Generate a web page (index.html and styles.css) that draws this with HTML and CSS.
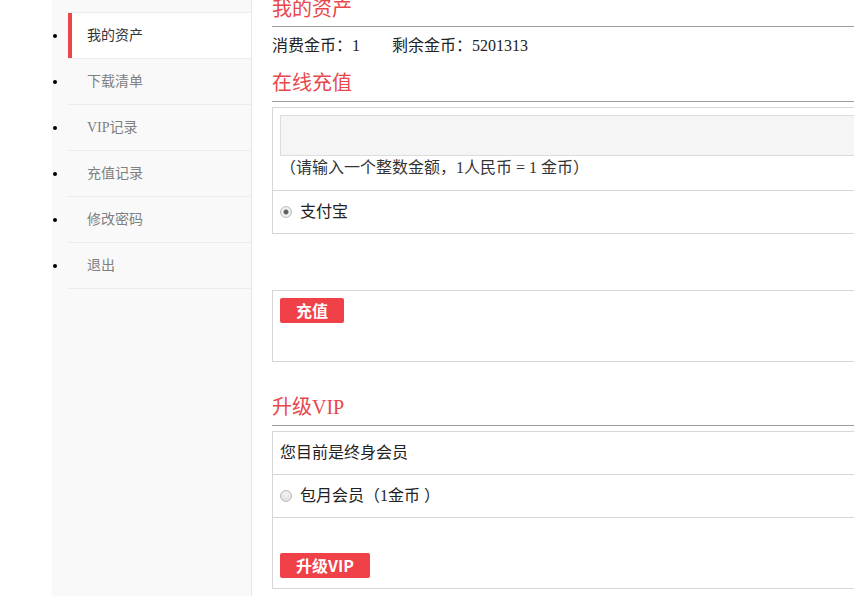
FILE: index.html
```html
<!DOCTYPE html>
<html lang="zh-CN">
<head>
<meta charset="utf-8">
<title>我的资产</title>
<link rel="stylesheet" href="styles.css">
</head>
<body>
<div class="page">
  <aside class="sidebar">
    <ul class="menu">
      <li class="menu-item active"><a class="menu-link" href="#">我的资产</a></li>
      <li class="menu-item"><a class="menu-link" href="#">下载清单</a></li>
      <li class="menu-item"><a class="menu-link" href="#">VIP记录</a></li>
      <li class="menu-item"><a class="menu-link" href="#">充值记录</a></li>
      <li class="menu-item"><a class="menu-link" href="#">修改密码</a></li>
      <li class="menu-item"><a class="menu-link" href="#">退出</a></li>
    </ul>
  </aside>
  <main class="content">
    <h2 class="title title-first">我的资产</h2>
    <p class="coins">消费金币：<span class="num">1</span><span class="coins-rest">剩余金币：<span class="num">5201313</span></span></p>

    <h2 class="title title-gap">在线充值</h2>
    <div class="box">
      <div class="row row-input">
        <input class="amount" type="text">
        <div class="hint">（请输入一个整数金额，1人民币 = 1 金币）</div>
      </div>
      <div class="row">
        <label class="choice"><input class="radio" type="radio" name="pay" checked>支付宝</label>
      </div>
    </div>

    <div class="box box-action">
      <button class="btn" type="button">充值</button>
    </div>

    <h2 class="title title-vip">升级VIP</h2>
    <div class="box">
      <div class="row">您目前是终身会员</div>
      <div class="row">
        <label class="choice"><input class="radio" type="radio" name="vip">包月会员（1金币 ）</label>
      </div>
      <div class="row row-submit">
        <button class="btn" type="button">升级VIP</button>
      </div>
    </div>
  </main>
</div>
</body>
</html>
```

FILE: styles.css
```css
html, body {
  margin: 0;
  padding: 0;
  background: #fff;
  overflow: hidden;
}

body {
  font-family: "Liberation Serif", "Noto Sans CJK SC", serif;
  color: #333;
}

.page {
  display: flex;
  align-items: stretch;
  min-height: 596px;
  padding-left: 52px;
}

.sidebar {
  box-sizing: border-box;
  width: 200px;
  flex: 0 0 200px;
  background: #f9f9f9;
  border-right: 1px solid #e6e6e6;
}

.menu {
  margin: 0;
  padding: 12px 0 0 16px;
  list-style: disc outside;
  color: #000;
  font-size: 14px;
}

.menu-item {
  border-bottom: 1px solid #ececec;
}

.menu-item:first-child {
  border-top: 1px solid #ececec;
}

.menu-link {
  display: block;
  height: 45px;
  line-height: 45px;
  padding-left: 19px;
  color: #808080;
  text-decoration: none;
}

.active .menu-link {
  background: #fff;
  color: #333;
  border-left: 4px solid #e8474b;
  padding-left: 15px;
}

.content {
  flex: 0 0 620px;
  width: 620px;
  margin-left: 20px;
}

.title {
  margin: 0;
  font-size: 20px;
  font-weight: normal;
  line-height: 18px;
  color: #e8474b;
  padding-bottom: 9px;
  border-bottom: 1px solid #9c9c9c;
}

.title-first {
  padding-bottom: 8px;
}

.title-gap {
  margin-top: 16px;
}

.title-vip {
  margin-top: 36px;
}

.coins {
  margin: 7px 0 0;
  font-size: 16px;
  line-height: 24px;
  color: #222;
}

.coins-rest {
  margin-left: 32px;
}

.box {
  margin-top: 5px;
  border: 1px solid #d6d6d6;
  font-size: 16px;
  color: #222;
}

.row {
  height: 42px;
  line-height: 42px;
  padding: 0 7px;
  border-bottom: 1px solid #d6d6d6;
}

.row:last-child {
  border-bottom: 0;
}

.row-input {
  height: auto;
  line-height: normal;
  padding: 7px 7px 10px;
}

.amount {
  display: block;
  box-sizing: border-box;
  width: 100%;
  height: 41px;
  margin: 0;
  border: 1px solid #dcdcdc;
  background: #f5f5f5;
  outline: none;
}

.hint {
  line-height: 24px;
  font-size: 16px;
  color: #333;
}

.choice {
  display: inline-flex;
  align-items: center;
}

.radio {
  appearance: none;
  -webkit-appearance: none;
  box-sizing: border-box;
  width: 12px;
  height: 12px;
  margin: 0 8px 0 0;
  border: 1px solid #bdbdbd;
  border-radius: 50%;
  background: radial-gradient(circle at 50% 35%, #f4f4f4 0%, #d9d9d9 100%);
}

.radio:checked {
  background: radial-gradient(circle, #555 0, #666 2px, #f2f2f2 3px, #e2e2e2 100%);
}

.box-action {
  margin-top: 56px;
  height: 63px;
  padding: 7px 7px 0;
}

.row-submit {
  height: 70px;
  line-height: normal;
  padding-top: 35px;
  box-sizing: border-box;
}

.btn {
  display: block;
  height: 25px;
  margin: 0;
  padding: 0 16px;
  border: 0;
  border-radius: 2px;
  background: #ef4147;
  color: #fff;
  font-family: "Noto Sans CJK SC", "Liberation Sans", sans-serif;
  font-size: 16px;
  font-weight: bold;
  line-height: 25px;
}
```
